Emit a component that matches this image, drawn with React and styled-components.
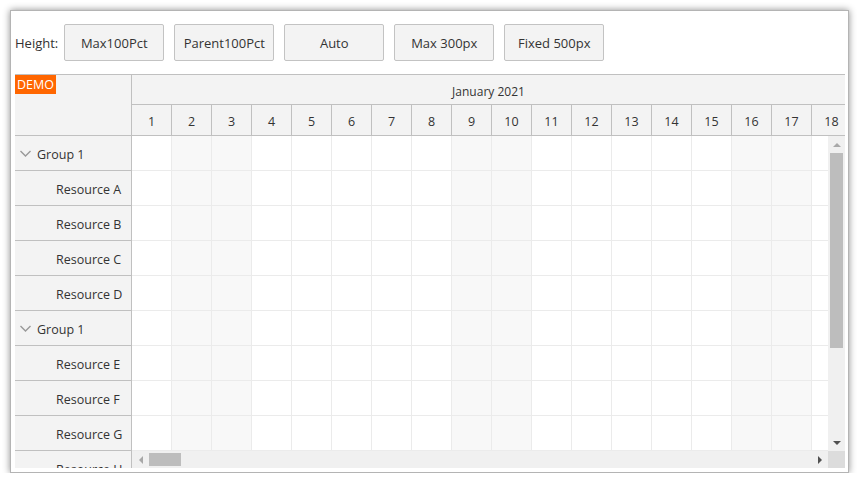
import React from 'react';
import styled, { createGlobalStyle } from 'styled-components';

const Global = createGlobalStyle`
  html, body { margin: 0; padding: 0; background: #fff; }
  body { font-family: "Open Sans", "Noto Sans", sans-serif; color: #333; }
`;

const Frame = styled.div`
  margin: 10px 0 0 10px;
  width: 839px;
  height: 463px;
  box-sizing: border-box;
  border: 1px solid #b4b4b4;
  box-shadow: 0 0 7px rgba(0, 0, 0, 0.45);
  background: #fff;
  padding: 13px 3px 0 4px;
  display: flex;
  flex-direction: column;
  overflow: hidden;
`;

const Toolbar = styled.div`
  display: flex;
  align-items: center;
  height: 37px;
  margin-bottom: 13px;
  font-size: 13px;
`;

const Label = styled.span`
  margin-right: 6px;
  color: #333;
  padding-top: 1px;
`;

const Button = styled.button`
  width: 100px;
  height: 37px;
  margin-right: 10px;
  box-sizing: border-box;
  border: 1px solid #c3c3c3;
  border-radius: 2px;
  background: #f3f3f3;
  color: #333;
  font-family: inherit;
  font-size: 13px;
  padding: 1px 0 0;
  cursor: pointer;
`;

const Scheduler = styled.div`
  display: grid;
  grid-template-columns: 117px 713px;
  height: 394px;
  box-sizing: border-box;
  border-top: 1px solid #c0c0c0;
  overflow: hidden;
  font-size: 12px;
`;

const RowHeaders = styled.div`
  background: #f3f3f3;
  border-right: 1px solid #c0c0c0;
  overflow: hidden;
  display: flex;
  flex-direction: column;
`;

const Corner = styled.div`
  height: 61px;
  flex: none;
  box-sizing: border-box;
  border-bottom: 1px solid #c0c0c0;
`;

const Demo = styled.span`
  display: inline-block;
  background: #ff6600;
  color: #fff;
  font-size: 12.5px;
  line-height: 19px;
  padding: 0 2px;
`;

const RowHeader = styled.div`
  height: 35px;
  flex: none;
  box-sizing: border-box;
  border-bottom: 1px solid #c0c0c0;
  display: flex;
  align-items: center;
  padding-left: ${(p) => (p.$group ? '4px' : '41px')};
  padding-top: 2px;
  color: #333;
  white-space: nowrap;
  font-size: 12.5px;
`;

const Chevron = styled.svg`
  width: 13px;
  height: 13px;
  margin-right: 5px;
  margin-top: -2px;
  flex: none;
`;

const Main = styled.div`
  display: flex;
  flex-direction: column;
  overflow: hidden;
`;

const HeaderRow = styled.div`
  display: flex;
  background: #f3f3f3;
  border-bottom: 1px solid #c0c0c0;
  height: ${(p) => p.$h}px;
  flex: none;
  box-sizing: content-box;
  overflow: hidden;
`;

const MonthCell = styled.div`
  flex: 1;
  display: flex;
  align-items: center;
  justify-content: center;
  padding-top: 3px;
  color: #333;
`;

const DayCell = styled.div`
  width: 40px;
  flex: none;
  box-sizing: border-box;
  border-right: 1px solid #c0c0c0;
  display: flex;
  align-items: center;
  justify-content: center;
  padding-top: 2px;
  font-size: 12.5px;
  color: #333;
`;

const Body = styled.div`
  display: flex;
  height: 315px;
  flex: none;
`;

const Cells = styled.div`
  width: 696px;
  overflow: hidden;
  display: flex;
  flex-direction: column;
`;

const CellRow = styled.div`
  display: flex;
  height: 35px;
  flex: none;
`;

const Cell = styled.div`
  width: 40px;
  flex: none;
  box-sizing: border-box;
  border-right: 1px solid #ebebeb;
  border-bottom: 1px solid #ebebeb;
  background: ${(p) => (p.$weekend ? '#f8f8f8' : '#fff')};
`;

const VScroll = styled.div`
  width: 17px;
  flex: none;
  background: #f0f0f0;
  display: flex;
  flex-direction: column;
  align-items: center;
`;

const VThumb = styled.div`
  width: 13px;
  height: 195px;
  background: #bdbdbd;
`;

const ArrowBox = styled.div`
  width: 17px;
  height: 17px;
  flex: none;
  display: flex;
  align-items: center;
  justify-content: center;
`;

const HScroll = styled.div`
  display: flex;
  height: 17px;
  flex: none;
`;

const HTrack = styled.div`
  width: 696px;
  background: #f0f0f0;
  display: flex;
  align-items: center;
`;

const HThumb = styled.div`
  width: 32px;
  height: 13px;
  background: #bdbdbd;
`;

const ScrollCorner = styled.div`
  width: 17px;
  background: #dcdcdc;
`;

const Spacer = styled.div`
  flex: 1;
`;

const Tri = ({ dir, color }) => {
  const pts = {
    up: '0,4 4,0 8,4',
    down: '0,0 8,0 4,4',
    left: '4,0 4,8 0,4',
    right: '0,0 4,4 0,8',
  }[dir];
  const vertical = dir === 'up' || dir === 'down';
  return (
    <svg width={vertical ? 8 : 4} height={vertical ? 4 : 8} viewBox={vertical ? '0 0 8 4' : '0 0 4 8'}>
      <polygon points={pts} fill={color} />
    </svg>
  );
};

const rows = [
  { name: 'Group 1', group: true },
  { name: 'Resource A' },
  { name: 'Resource B' },
  { name: 'Resource C' },
  { name: 'Resource D' },
  { name: 'Group 1', group: true },
  { name: 'Resource E' },
  { name: 'Resource F' },
  { name: 'Resource G' },
  { name: 'Resource H' },
];

const days = Array.from({ length: 18 }, (_, i) => i + 1);
const isWeekend = (d) => {
  const dow = (5 + d - 1) % 7; // Jan 1 2021 is a Friday
  return dow === 6 || dow === 0;
};

export default function App() {
  return (
    <>
      <Global />
      <Frame>
        <Toolbar>
          <Label>Height:</Label>
          <Button>Max100Pct</Button>
          <Button>Parent100Pct</Button>
          <Button>Auto</Button>
          <Button>Max 300px</Button>
          <Button>Fixed 500px</Button>
        </Toolbar>
        <Scheduler>
          <RowHeaders>
            <Corner>
              <Demo>DEMO</Demo>
            </Corner>
            {rows.map((r, i) => (
              <RowHeader key={i} $group={r.group}>
                {r.group && (
                  <Chevron viewBox="0 0 13 13">
                    <polyline points="1.5,4 6.5,9 11.5,4" fill="none" stroke="#999" strokeWidth="1.4" />
                  </Chevron>
                )}
                {r.name}
              </RowHeader>
            ))}
          </RowHeaders>
          <Main>
            <HeaderRow $h={29}>
              <MonthCell>January 2021</MonthCell>
            </HeaderRow>
            <HeaderRow $h={30}>
              {days.map((d) => (
                <DayCell key={d}>{d}</DayCell>
              ))}
            </HeaderRow>
            <Body>
              <Cells>
                {rows.map((r, i) => (
                  <CellRow key={i}>
                    {days.map((d) => (
                      <Cell key={d} $weekend={isWeekend(d)} />
                    ))}
                  </CellRow>
                ))}
              </Cells>
              <VScroll>
                <ArrowBox>
                  <Tri dir="up" color="#a8a8a8" />
                </ArrowBox>
                <VThumb />
                <Spacer />
                <ArrowBox>
                  <Tri dir="down" color="#505050" />
                </ArrowBox>
              </VScroll>
            </Body>
            <HScroll>
              <HTrack>
                <ArrowBox>
                  <Tri dir="left" color="#a8a8a8" />
                </ArrowBox>
                <HThumb />
                <Spacer />
                <ArrowBox>
                  <Tri dir="right" color="#505050" />
                </ArrowBox>
              </HTrack>
              <ScrollCorner />
            </HScroll>
          </Main>
        </Scheduler>
      </Frame>
    </>
  );
}
